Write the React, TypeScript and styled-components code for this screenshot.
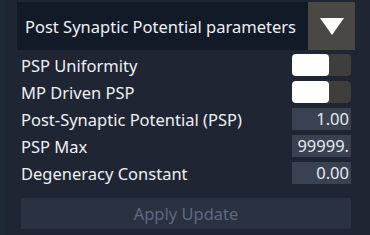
import styled, { createGlobalStyle } from "styled-components";

const GlobalStyle = createGlobalStyle`
  html, body {
    margin: 0;
    padding: 0;
    background: #1f2533;
  }
  body {
    font-family: "Noto Sans", "Open Sans", sans-serif;
  }
`;

const Panel = styled.div`
  width: 370px;
  height: 235px;
  box-sizing: border-box;
  padding: 2px 15px 0 12px;
  background: #1f2533;
  border-left: 5px solid #1b2a35;
`;

const Dropdown = styled.div`
  display: flex;
  height: 48px;
  background: #121a28;
`;

const DropdownLabel = styled.div`
  flex: 1;
  display: flex;
  align-items: center;
  padding-left: 8px;
  color: #eef0f3;
  font-size: 16.5px;
  white-space: nowrap;
`;

const DropdownButton = styled.div`
  width: 47px;
  display: flex;
  align-items: center;
  justify-content: center;
  background: #4a4845;
`;

const Rows = styled.div`
  display: flex;
  flex-direction: column;
  gap: 5px;
  margin: 4px 4px 0 4px;
`;

const Row = styled.div`
  display: flex;
  align-items: center;
  justify-content: space-between;
  height: 22px;
`;

const Label = styled.span`
  color: #eef0f3;
  font-size: 16.5px;
  white-space: nowrap;
`;

const Toggle = styled.div`
  width: 59px;
  height: 22px;
  border-radius: 4px;
  background: #3f3e3c;
  display: flex;
`;

const Knob = styled.div`
  width: 37px;
  height: 22px;
  border-radius: 4px;
  background: #ffffff;
`;

const NumberField = styled.div`
  width: 59px;
  height: 22px;
  box-sizing: border-box;
  background: #3a4151;
  color: #e6e9ee;
  font-size: 16.5px;
  line-height: 22px;
  text-align: right;
  padding-right: 2px;
  overflow: hidden;
  white-space: nowrap;
`;

const ApplyButton = styled.div`
  margin: 14px 4px 0 4px;
  height: 31px;
  background: #2a3141;
  color: #5c6a84;
  font-size: 16.5px;
  display: flex;
  align-items: center;
  justify-content: center;
`;

const rows: { label: string; toggle?: boolean; value?: string }[] = [
  { label: "PSP Uniformity", toggle: true },
  { label: "MP Driven PSP", toggle: true },
  { label: "Post-Synaptic Potential (PSP)", value: "1.00" },
  { label: "PSP Max", value: "99999." },
  { label: "Degeneracy Constant", value: "0.00" },
];

function App() {
  return (
    <Panel>
      <GlobalStyle />
      <Dropdown>
        <DropdownLabel>Post Synaptic Potential parameters</DropdownLabel>
        <DropdownButton>
          <svg width="24" height="17" viewBox="0 0 24 17">
            <polygon points="0,0 24,0 12,17" fill="#ffffff" />
          </svg>
        </DropdownButton>
      </Dropdown>
      <Rows>
        {rows.map((r) => (
          <Row key={r.label}>
            <Label>{r.label}</Label>
            {r.toggle ? (
              <Toggle>
                <Knob />
              </Toggle>
            ) : (
              <NumberField>{r.value}</NumberField>
            )}
          </Row>
        ))}
      </Rows>
      <ApplyButton>Apply Update</ApplyButton>
    </Panel>
  );
}

export default App;
